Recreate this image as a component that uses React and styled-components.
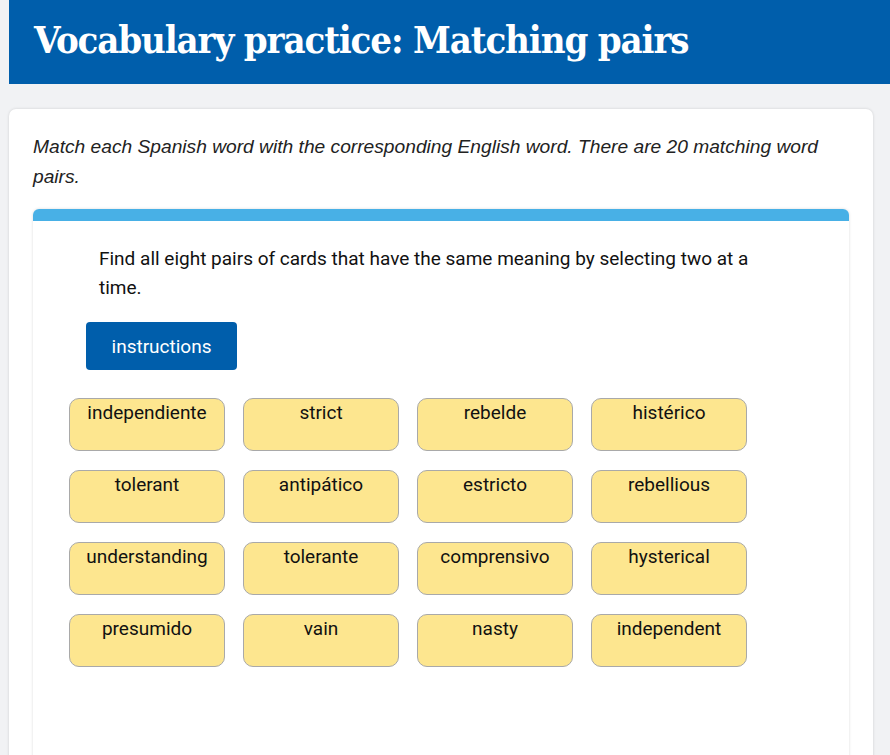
import React from "react"
import styled, { createGlobalStyle } from "styled-components"

const GlobalStyle = createGlobalStyle`
  html, body {
    margin: 0;
    padding: 0;
    background: #f1f2f4;
    font-family: Roboto, "Liberation Sans", sans-serif;
  }
`

const Page = styled.div`
  padding: 0 17px 0 9px;
  min-height: 755px;
  box-sizing: border-box;
`

const Header = styled.header`
  background: #005eab;
  height: 84px;
  margin-right: -17px;
  padding: 0 25px;
  display: flex;
  align-items: center;
  box-sizing: border-box;
`

const Title = styled.h1`
  margin: 0;
  color: #fff;
  font-family: "DejaVu Serif Condensed", "DejaVu Serif", "Liberation Serif", serif;
  font-stretch: condensed;
  font-weight: bold;
  font-size: 38px;
  letter-spacing: -1.15px;
  line-height: 1;
  padding-bottom: 4px;
`

const Card = styled.section`
  margin-top: 25px;
  background: #fff;
  border-radius: 7px;
  box-shadow: 0 0 3px rgba(0, 0, 0, 0.15);
  padding: 23px 24px 0;
  height: 700px;
  box-sizing: border-box;
`

const Intro = styled.p`
  margin: 0;
  font-family: "Liberation Sans", Arial, sans-serif;
  font-style: italic;
  font-size: 19.2px;
  line-height: 30px;
  color: #222;
`

const Panel = styled.div`
  margin-top: 17px;
  border-radius: 6px 6px 0 0;
  border-top: 12px solid #48b0e6;
  box-shadow: 0 0 3px rgba(0, 0, 0, 0.15);
  padding: 23px 36px 0;
  height: 600px;
  box-sizing: border-box;
`

const Prompt = styled.p`
  margin: 0 30px 0 30px;
  font-size: 19px;
  line-height: 29px;
  color: #111;
`

const InstructionsButton = styled.button`
  margin: 20px 0 0 17px;
  height: 48px;
  width: 151px;
  border: none;
  border-radius: 4px;
  background: #005eab;
  color: #fff;
  font-family: inherit;
  font-size: 19px;
  cursor: pointer;
`

const Grid = styled.div`
  margin-top: 28px;
  display: grid;
  grid-template-columns: repeat(4, 156px);
  column-gap: 18px;
  row-gap: 19px;
`

const WordCard = styled.div`
  height: 53px;
  box-sizing: border-box;
  background: #fde68f;
  border: 1px solid #a9a9a9;
  border-radius: 10px;
  text-align: center;
  padding-top: 2px;
  font-size: 19px;
  line-height: 24px;
  color: #111;
  cursor: pointer;
`

const words = [
  "independiente", "strict", "rebelde", "histérico",
  "tolerant", "antipático", "estricto", "rebellious",
  "understanding", "tolerante", "comprensivo", "hysterical",
  "presumido", "vain", "nasty", "independent",
]

export default function App() {
  return (
    <>
      <GlobalStyle />
      <Page>
        <Header>
          <Title>Vocabulary practice: Matching pairs</Title>
        </Header>
        <Card>
          <Intro>
            Match each Spanish word with the corresponding English word. There are 20 matching word pairs.
          </Intro>
          <Panel>
            <Prompt>
              Find all eight pairs of cards that have the same meaning by selecting two at a time.
            </Prompt>
            <InstructionsButton>instructions</InstructionsButton>
            <Grid>
              {words.map((w) => (
                <WordCard key={w}>{w}</WordCard>
              ))}
            </Grid>
          </Panel>
        </Card>
      </Page>
    </>
  )
}
